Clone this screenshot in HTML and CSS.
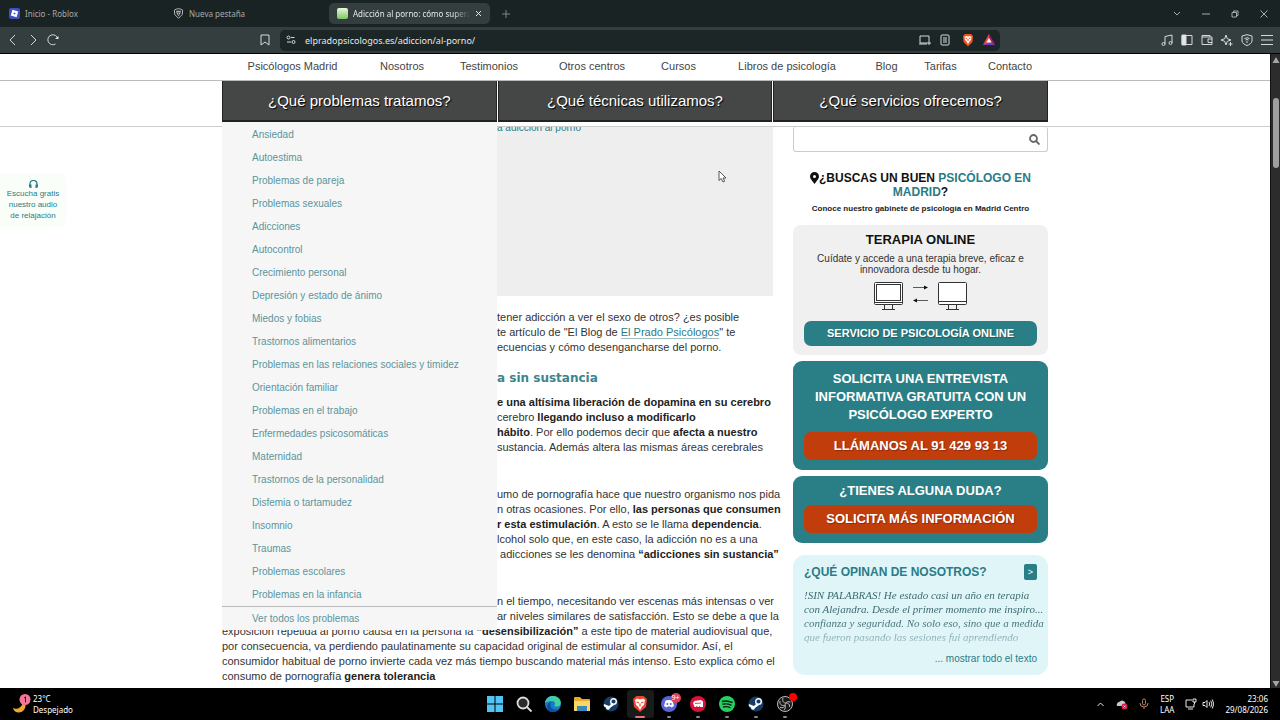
FILE: index.html
```
<!DOCTYPE html>
<html lang="es">
<head>
    <meta charset="UTF-8">
    <meta name="viewport" content="width=device-width, initial-scale=1.0">
    <title>Adicción al porno: cómo superarla</title>
    <link rel="stylesheet" href="styles.css">
</head>
<body>
    <!-- Browser window -->
    <div class="tabbar">
        <button class="tab">
            <svg width="11" height="11" viewBox="0 0 11 11"><rect width="11" height="11" rx="2" fill="#3f4fc4"/><path d="M3.4 1.8 9.2 3.4 7.6 9.2 1.8 7.6Z" fill="#fff"/><path d="M4.9 4.5l1.6.4-.4 1.6-1.6-.4z" fill="#3f4fc4"/></svg>
            <span>Inicio - Roblox</span>
        </button>
        <button class="tab">
            <svg width="11" height="11" viewBox="0 0 16 16"><path d="M8 1l3 .5L14 3l-.5 6.5L8 15 2.500 9.500 2 3l3-1.500z" fill="none" stroke="#b5baba" stroke-width="1.400"/><path d="M4.500 4h7l-1 4L8 12 5.500 8z" fill="#b5baba"/><path d="M6 6l2 1 2-1M8 7v3" stroke="#1a2324" fill="none"/></svg>
            <span>Nueva pestaña</span>
        </button>
        <button class="tab active">
            <svg width="11" height="11" viewBox="0 0 11 11"><defs><linearGradient id="leaf" x2="0" y2="1"><stop stop-color="#e9f9df"/><stop offset="1" stop-color="#7dc663"/></linearGradient></defs><rect width="11" height="11" rx="2" fill="url(#leaf)"/></svg>
            <span class="fade">Adicción al porno: cómo supera</span>
            <svg width="7" height="7" viewBox="0 0 7 7" stroke="#e4e7e7" fill="none"><path d="M1 1l5 5M6 1L1 6"/></svg>
        </button>
        <button class="new-tab" aria-label="Nueva pestaña"><svg width="8" height="8" viewBox="0 0 8 8" stroke="#7d8586"><path d="M4 0v8M0 4h8"/></svg></button>
        <div class="window-controls">
            <button aria-label="Buscar pestañas"><svg width="8" height="8" viewBox="0 0 8 8"><path d="M1 2l3 3 3-3"/></svg></button>
            <button aria-label="Minimizar"><svg width="8" height="8" viewBox="0 0 8 8"><path d="M0 4h8"/></svg></button>
            <button aria-label="Restaurar"><svg width="8" height="8" viewBox="0 0 8 8"><path d="M1 2.500h4.500V7H1zM2.500 2.500V1H7v4.500H5.500"/></svg></button>
            <button aria-label="Cerrar"><svg width="8" height="8" viewBox="0 0 8 8"><path d="M.5.5l7 7M7.500.5l-7 7"/></svg></button>
        </div>
    </div>
    <div class="toolbar">
        <div class="nav-buttons">
            <button aria-label="Atrás"><svg width="12" height="12" viewBox="0 0 12 12"><path d="M8 1L3 6l5 5"/></svg></button>
            <button aria-label="Adelante"><svg width="12" height="12" viewBox="0 0 12 12"><path d="M4 1l5 5-5 5"/></svg></button>
            <button aria-label="Recargar"><svg width="12" height="12" viewBox="0 0 12 12"><path d="M8.500 10A5 5 0 1 1 10.800 5"/><path d="M8 5h3.500V2z" fill="#e4e7e7" stroke="none"/></svg></button>
        </div>
        <div class="address">
            <button aria-label="Marcador"><svg width="10" height="12" viewBox="0 0 10 12"><path d="M1 1h8v10L5 8l-4 3z"/></svg></button>
            <div class="url">
                <svg width="10" height="10" viewBox="0 0 10 10"><circle cx="2.500" cy="2.500" r="1.500"/><path d="M5 2.500h3.500M1 7h4"/><circle cx="7.500" cy="7" r="1.500"/></svg>
                <input type="text" aria-label="Dirección" value="elpradopsicologos.es/adiccion/al-porno/">
                <svg width="12" height="10" viewBox="0 0 12 10"><path d="M8 8H1V1h9v5M0 9h8M10 6v4M8 8h4"/></svg>
                <svg width="10" height="12" viewBox="0 0 10 12"><rect x="1" y="1" width="8" height="10" rx="1"/><path d="M3 4h4M3 6h4M3 8h4"/></svg>
                <svg class="brave" width="12" height="14" viewBox="0 0 12 14"><path d="M3 1h6l2 2-.5 6L6 13.500 1.500 9 1 3z" fill="#f4511e" stroke="none"/><path d="M2.500 4L4 3l2 .5L8 3l1.500 1-.5 3-1.500 1.500L6 11 4.500 8.500 3 7z" fill="#fff" stroke="none"/><path d="M3.500 5l1.500.7M8.500 5L7 5.700M6 6v2" stroke="#f4511e"/></svg>
                <svg width="12" height="12" viewBox="0 0 12 12"><g stroke="none"><path d="M6 0L0 11h12z" fill="#7a3bb8"/><path d="M6 0L0 11l6-3z" fill="#f0452a"/><path d="M6 0l6 11-6-3z" fill="#9e1f63"/><path d="M6 4L3.300 8.500h5.400z" fill="#fff"/></g></svg>
            </div>
        </div>
        <div class="extras">
            <button aria-label="Música"><svg width="12" height="12" viewBox="0 0 12 12"><path d="M4 10V2.500L11 1v8"/><circle cx="2.500" cy="10" r="1.500"/><circle cx="9.500" cy="9" r="1.500"/></svg></button>
            <button aria-label="Barra lateral"><svg width="12" height="12" viewBox="0 0 12 12"><path d="M1 1.500h10v9H1z"/><path d="M1 1h4v10H1z" fill="#e4e7e7"/></svg></button>
            <button aria-label="Cartera"><svg width="12" height="12" viewBox="0 0 12 12"><path d="M9 3V1.500H1v9h10V3H1M11 5H7v3.500h4"/></svg></button>
            <button aria-label="Leo"><svg width="12" height="12" viewBox="0 0 12 12"><path d="M5 1l1.300 3.700L10 6 6.300 7.300 5 11 3.700 7.300 0 6l3.700-1.300zM9.500 8v4M7.500 10h4"/></svg></button>
            <button aria-label="VPN"><svg width="12" height="12" viewBox="0 0 12 12"><path d="M6 .7L11 2v5c0 2-3 4-5 4.500C4 11 1 9 1 7V2z"/><path d="M3.500 4.500Q6 3 8.500 4.500M4.500 6Q6 5 7.500 6M6 7v2"/></svg></button>
            <button aria-label="Menú"><svg width="12" height="12" viewBox="0 0 12 12"><path d="M0 1.500h12M0 6h12M0 10.500h12"/></svg></button>
        </div>
    </div>

    <!-- Web page -->
    <div class="viewport">
        <div class="page">
            <header class="site-header">
                <nav class="top-nav">
                    <div class="wrap top-links">
                        <a href="#">Psicólogos Madrid</a>
                        <a href="#">Nosotros</a>
                        <a href="#">Testimonios</a>
                        <a href="#">Otros centros</a>
                        <a href="#">Cursos</a>
                        <a href="#">Libros de psicología</a>
                        <a href="#">Blog</a>
                        <a href="#">Tarifas</a>
                        <a href="#">Contacto</a>
                    </div>
                </nav>
                <nav class="wrap main-menu">
                    <div class="menu-item">
                        <a class="menu-title" href="#">¿Qué problemas tratamos?</a>
                        <ul class="dropdown">
                            <li><a href="#">Ansiedad</a></li>
                            <li><a href="#">Autoestima</a></li>
                            <li><a href="#">Problemas de pareja</a></li>
                            <li><a href="#">Problemas sexuales</a></li>
                            <li><a href="#">Adicciones</a></li>
                            <li><a href="#">Autocontrol</a></li>
                            <li><a href="#">Crecimiento personal</a></li>
                            <li><a href="#">Depresión y estado de ánimo</a></li>
                            <li><a href="#">Miedos y fobias</a></li>
                            <li><a href="#">Trastornos alimentarios</a></li>
                            <li><a href="#">Problemas en las relaciones sociales y timidez</a></li>
                            <li><a href="#">Orientación familiar</a></li>
                            <li><a href="#">Problemas en el trabajo</a></li>
                            <li><a href="#">Enfermedades psicosomáticas</a></li>
                            <li><a href="#">Maternidad</a></li>
                            <li><a href="#">Trastornos de la personalidad</a></li>
                            <li><a href="#">Disfemia o tartamudez</a></li>
                            <li><a href="#">Insomnio</a></li>
                            <li><a href="#">Traumas</a></li>
                            <li><a href="#">Problemas escolares</a></li>
                            <li><a href="#">Problemas en la infancia</a></li>
                            <li class="all"><a href="#">Ver todos los problemas</a></li>
                        </ul>
                    </div>
                    <div class="menu-item"><a class="menu-title" href="#">¿Qué técnicas utilizamos?</a></div>
                    <div class="menu-item"><a class="menu-title" href="#">¿Qué servicios ofrecemos?</a></div>
                </nav>
            </header>

            <main class="wrap content">
                <article class="post">
                    <div class="toc"><a href="#">a adicción al porno</a></div>
                    <p class="beside-menu">tener adicción a ver el sexo de otros? ¿es posible<br>te artículo de "El Blog de <a href="#">El Prado Psicólogos</a>" te<br>ecuencias y cómo desengancharse del porno.</p>
                    <h2 class="beside-menu">a sin sustancia</h2>
                    <p class="beside-menu"><b>e una altísima liberación de dopamina en su cerebro</b><br>cerebro <b>llegando incluso a modificarlo</b><br><b>hábito</b>. Por ello podemos decir que <b>afecta a nuestro</b><br>sustancia. Además altera las mismas áreas cerebrales</p>
                    <p class="beside-menu spaced">umo de pornografía hace que nuestro organismo nos pida<br>n otras ocasiones. Por ello, <b>las personas que consumen</b><br><b>r esta estimulación</b>. A esto se le llama <b>dependencia</b>.<br>lcohol solo que, en este caso, la adicción no es a una<br>&nbsp;adicciones se les denomina <b>“adicciones sin sustancia”</b></p>
                    <p class="beside-menu spaced">n el tiempo, necesitando ver escenas más intensas o ver<br>ar niveles similares de satisfacción. Esto se debe a que la</p>
                    <p>exposición repetida al porno causa en la persona la <b>“desensibilización”</b> a este tipo de material audiovisual que,<br>por consecuencia, va perdiendo paulatinamente su capacidad original de estimular al consumidor. Así, el<br>consumidor habitual de porno invierte cada vez más tiempo buscando material más intenso. Esto explica cómo el<br>consumo de pornografía <b>genera tolerancia</b></p>
                </article>

                <aside class="sidebar">
                    <form class="search">
                        <input type="search" aria-label="Buscar">
                        <button type="button" aria-label="Buscar"><svg width="11" height="11" viewBox="0 0 11 11" fill="none" stroke="#666" stroke-width="1.800"><circle cx="4.500" cy="4.500" r="3.500"/><path d="M7 7l3.500 3.500"/></svg></button>
                    </form>
                    <h3 class="find"><svg width="9" height="12" viewBox="0 0 9 12"><path fill-rule="evenodd" d="M4.500 0A4.500 4.500 0 0 1 9 4.500C9 7 6 9.500 4.500 12 3 9.500 0 7 0 4.500A4.500 4.500 0 0 1 4.500 0zm0 3a1.500 1.500 0 1 0 0 3 1.500 1.500 0 0 0 0-3z" fill="#111"/></svg>¿BUSCAS UN BUEN <a href="#">PSICÓLOGO EN MADRID</a>?</h3>
                    <p class="find-sub">Conoce nuestro gabinete de psicología en Madrid Centro</p>

                    <section class="online">
                        <h3>TERAPIA ONLINE</h3>
                        <p>Cuídate y accede a una terapia breve, eficaz e innovadora desde tu hogar.</p>
                        <svg width="94" height="29" viewBox="0 0 94 29" fill="none" stroke="#333">
                            <rect x=".5" y=".5" width="28" height="22" rx="1" fill="#fff"/><rect x="2.500" y="2.500" width="24" height="16"/><path d="M.5 20.500h28M10.500 23v4M18.500 23v4M8 27.500h13"/>
                            <rect x="64.500" y=".5" width="28" height="22" rx="1" fill="#fff"/><path d="M64.500 19.500h28M74.500 23v4M82.500 23v4M72 27.500h13"/>
                            <path d="M39 5.500h12M42 18.500h12" stroke-width=".8"/><path d="M50 3.500l4 2-4 2zM43 16.500l-4 2 4 2z" fill="#111" stroke="none"/>
                        </svg>
                        <a class="btn teal" href="#">SERVICIO DE PSICOLOGÍA ONLINE</a>
                    </section>

                    <section class="cta">
                        <h3>SOLICITA UNA ENTREVISTA INFORMATIVA GRATUITA CON UN PSICÓLOGO EXPERTO</h3>
                        <a class="btn orange" href="#">LLÁMANOS AL 91 429 93 13</a>
                    </section>
                    <section class="cta small">
                        <h3>¿TIENES ALGUNA DUDA?</h3>
                        <a class="btn orange" href="#">SOLICITA MÁS INFORMACIÓN</a>
                    </section>

                    <section class="reviews">
                        <div class="reviews-head">
                            <h3>¿QUÉ OPINAN DE NOSOTROS?</h3>
                            <button aria-label="Siguiente">&gt;</button>
                        </div>
                        <blockquote>!SIN PALABRAS! He estado casi un año en terapia<br>con Alejandra. Desde el primer momento me inspiro...<br>confianza y seguridad. No solo eso, sino que a medida<br>que fueron pasando las sesiones fui aprendiendo</blockquote>
                        <a class="more" href="#">... mostrar todo el texto</a>
                    </section>
                </aside>
            </main>

            <a class="audio" href="#">
                <svg width="9" height="8" viewBox="0 0 9 8"><path d="M1 5V4a3.500 3.500 0 0 1 7 0v1" fill="none" stroke="#2a7c86" stroke-width="1.200"/><path d="M0 4.500h2.500V8H1.500L0 7zM9 4.500H6.500V8h1L9 7z" fill="#2a7c86"/></svg>
                <span>Escucha gratis<br>nuestro audio<br>de relajación</span>
            </a>
            <svg class="cursor" width="9" height="13" viewBox="0 0 9 13"><path d="M1 1v9.500l2.200-2L5 12l1.700-.8L5 8h3z" fill="#fff" stroke="#444" stroke-width=".9"/></svg>
        </div>
        <div class="scrollbar">
            <svg width="8" height="6" viewBox="0 0 8 6"><path d="M4 0l3.500 6h-7z" fill="#a5a5a5"/></svg>
            <div class="track"><div class="thumb"></div></div>
            <svg width="8" height="6" viewBox="0 0 8 6"><path d="M4 6L.5 0h7z" fill="#a5a5a5"/></svg>
        </div>
    </div>

    <!-- Windows taskbar -->
    <footer class="taskbar">
        <button class="weather">
            <svg width="20" height="20" viewBox="0 0 20 20"><path d="M13 9c2 5-2 10-7 9.500Q2 18 1 14c4 2 8 0 10-5z" fill="#f0a732"/><circle cx="13" cy="5.500" r="5.500" fill="#f2789a"/><path d="M12 4l1.500-1.200v5.500" fill="none" stroke="#511"/></svg>
            <span>23°C<br>Despejado</span>
        </button>
        <div class="apps">
            <button aria-label="Inicio"><svg viewBox="0 0 18 18"><path d="M1 1h7.500v7.500H1zM9.500 1H17v7.500H9.500zM1 9.500h7.500V17H1zM9.500 9.500H17V17H9.500z" fill="#53c5f5"/></svg></button>
            <button aria-label="Buscar"><svg viewBox="0 0 18 18" fill="none"><circle cx="8" cy="8" r="5.500" stroke="#ddd" stroke-width="1.800" fill="#2b2b2b"/><path d="M12 12l4.500 4.500" stroke="#ddd" stroke-width="1.800"/></svg></button>
            <button aria-label="Edge"><svg viewBox="0 0 18 18"><circle cx="9" cy="9" r="8" fill="#167bc8"/><path d="M1 8C2 2 7 .5 11 1.300c5 1 7 6 5 9-1 1.500-4 1.500-6 .7 2-2 1-5-2-5S3 6.500 1 8z" fill="#42d09c"/><path d="M6.500 9c-1 4 3 7 8 5-3 4-9 4-11 0-1-3 0-6 3-7z" fill="#0c4f9c"/><path d="M1 8c1-4 5-6 9-4-4 0-6 1-9 4z" fill="#33bde8"/></svg></button>
            <button aria-label="Archivos"><svg viewBox="0 0 18 18"><path d="M1 3q0-1 1-1h5l2 2h7q1 0 1 1v11H1z" fill="#e8a92e"/><path d="M1 6h16v10H1z" fill="#fbd665"/><path d="M4 11h10v5H4z" fill="#3888bd"/></svg></button>
            <button aria-label="Steam"><svg viewBox="0 0 18 18"><circle cx="9" cy="9" r="7.500" fill="#183c68"/><circle cx="11.500" cy="6.500" r="2.800" fill="#183c68" stroke="#fff" stroke-width="1.400"/><path d="M2 9l5 2 3-3 2 2-4 3a2 2 0 0 1-4-.5L1.700 11z" fill="#fff"/></svg></button>
            <button class="current" aria-label="Brave"><svg viewBox="0 0 18 18"><path d="M5.500 1h7L16 4l-1 8-6 5-6-5L2 4z" fill="#e8442e"/><path d="M4 5l2-1.500 3 .7 3-.7L14 5l-1 5-2 1.500L9 15l-2-3.500L5 10z" fill="#fff"/><path d="M5.500 7l2.500 1M12.500 7L10 8M9 8.500v3" stroke="#e8442e" stroke-width="1.200"/></svg></button>
            <button class="open" aria-label="Discord"><svg viewBox="0 0 18 18"><circle cx="9" cy="9" r="8" fill="#5865d8"/><path d="M5.500 5.500Q9 4.500 12.500 5.500L14 11l-2.500 1.500-1-1h-3l-1 1L4 11z" fill="#fff"/><circle cx="7.300" cy="9" r="1" fill="#5865d8"/><circle cx="10.700" cy="9" r="1" fill="#5865d8"/></svg><span class="badge">9+</span></button>
            <button class="open" aria-label="Riot"><svg viewBox="0 0 18 18"><circle cx="9" cy="9" r="8" fill="#d9123c"/><path d="M4 8l1.500-2L12 5l2 1.500V12h-3v-1.500L10 12H8.500L8 10.500 7 12H5.500z" fill="#fff"/><path d="M6 8.500l6-.5" stroke="#d9123c" stroke-width=".8"/></svg></button>
            <button class="open" aria-label="Spotify"><svg viewBox="0 0 18 18"><circle cx="9" cy="9" r="8" fill="#25d162"/><path d="M4 6.500q5-1.500 10.500 1M4.500 9.300q4.500-1.200 9 1M5 12q4-1 7.500.8" fill="none" stroke="#0b1e11" stroke-width="1.400"/></svg></button>
            <button class="open" aria-label="Steam"><svg viewBox="0 0 18 18"><circle cx="9" cy="9" r="7.500" fill="#183c68"/><circle cx="11.500" cy="6.500" r="2.800" fill="#183c68" stroke="#fff" stroke-width="1.400"/><path d="M2 9l5 2 3-3 2 2-4 3a2 2 0 0 1-4-.5L1.700 11z" fill="#fff"/></svg></button>
            <button class="open" aria-label="OBS"><svg viewBox="0 0 18 18" fill="none" stroke="#bbb"><circle cx="9" cy="9" r="7.500" fill="#181818"/><path d="M7 3c-1 4 1 5 3 5s4 1 3.500 4M14.500 7c-4-1-5 1-5.500 3s-2 3.500-5 2.500M4 6c-1 3 2 5 4 4.500M9 10c1 2 0 4-1 5"/></svg><span class="badge rec"></span></button>
        </div>
        <div class="tray">
            <svg width="9" height="9" viewBox="0 0 9 9"><path d="M1.500 6l3-3 3 3"/></svg>
            <svg width="12" height="12" viewBox="0 0 12 12"><path d="M1 8a3 3 0 0 1 2-4q3-3 6 0l1 4z" fill="#c9c9c9" stroke="none"/><circle cx="8.500" cy="8.500" r="3" fill="#d81b50" stroke="none"/><path d="M7.500 7.500l2 2M9.500 7.500l-2 2" stroke-width=".8"/></svg>
            <svg class="mic" width="10" height="12" viewBox="0 0 10 12"><rect x="3.500" y="1" width="3" height="6" rx="1.500"/><path d="M1 5q0 4 4 4t4-4M5 9v2"/></svg>
            <span class="lang">ESP<br>LAA</span>
            <svg class="net" width="12" height="12" viewBox="0 0 12 12"><path d="M7 2H1v7h8V6M3 11h5M8 1h3v3H8zM9.500 4v2"/></svg>
            <svg width="12" height="12" viewBox="0 0 12 12"><path d="M1 4.500h2l2-2v7l-2-2H1zM7 4q1.500 2 0 4M8.700 2.700q2.500 3.300 0 6.600M10.300 1.500q3 4.500 0 9"/></svg>
            <span class="clock">23:06<br>29/08/2026</span>
        </div>
    </footer>
</body>
</html>
```

FILE: styles.css
```
* {
    box-sizing: border-box;
}

body {
    display: flex;
    flex-direction: column;
    height: 100vh;
    margin: 0;
    overflow: hidden;
    font-family: "Liberation Sans", Arial, sans-serif;
    font-size: 11px;
    color: #333;
    background-color: #fff;
}

h2, h3, p, ul, blockquote {
    margin: 0;
    padding: 0;
}

a {
    color: #2a7c86;
    text-decoration: none;
}

button {
    display: flex;
    align-items: center;
    justify-content: center;
    padding: 0;
    border: none;
    background: none;
    color: inherit;
    font: inherit;
}

svg {
    flex: none;
}

/* Browser window */
.tabbar {
    display: flex;
    align-items: center;
    height: 27px;
    padding-left: 1px;
    background-color: #1a2324;
    color: #a4abab;
    font-family: "Noto Sans", sans-serif;
    font-size: 8px;
}

.tab {
    justify-content: flex-start;
    gap: 5px;
    width: 161px;
    height: 21px;
    margin-right: 3px;
    padding: 0 8px;
    border-radius: 5px;
}

.tab.active {
    background-color: #353e3f;
    color: #e4e7e7;
}

.fade {
    flex: 1;
    overflow: hidden;
    white-space: nowrap;
    text-align: left;
    mask-image: linear-gradient(to right, #000 85%, transparent);
}

.new-tab {
    width: 25px;
}

.window-controls {
    display: flex;
    gap: 4px;
    margin-left: auto;
    padding-right: 4px;
}

.window-controls button {
    width: 25px;
}

.window-controls svg {
    fill: none;
    stroke: #a4abab;
}

.toolbar {
    display: grid;
    grid-template-columns: 257fr 743fr 280fr;
    align-items: center;
    height: 27px;
    border-bottom: 1px solid #000;
    background-color: #353e3f;
}

.toolbar svg {
    fill: none;
    stroke: #d5d9d9;
}

.nav-buttons,
.extras,
.address {
    display: flex;
    align-items: center;
}

.nav-buttons {
    gap: 8px;
    padding-left: 7px;
}

.address {
    gap: 10px;
    padding-left: 3px;
}

.url {
    display: flex;
    flex: 1;
    align-items: center;
    gap: 9px;
    height: 21px;
    padding: 0 5px 0 6px;
    border-radius: 5px;
    background-color: #1c2627;
}

.url input {
    flex: 1;
    min-width: 0;
    padding: 0;
    border: none;
    background: none;
    color: #e4e7e7;
    font: 9px "Noto Sans", sans-serif;
}

.url .brave {
    margin-left: 3px;
}

.extras {
    justify-content: flex-end;
    gap: 8px;
    padding-right: 7px;
}

/* Page */
.viewport {
    display: flex;
    flex: 1;
    min-height: 0;
}

.page {
    position: relative;
    flex: 1;
    overflow: hidden;
}

.wrap {
    width: 100%;
    max-width: 826px;
    margin: 0 auto;
}

.site-header {
    position: relative;
    z-index: 2;
    padding-bottom: 4px;
    border-bottom: 1px solid #ccc;
    background-color: #fff;
}

.top-nav {
    border-bottom: 1px solid #bbb;
}

.top-links {
    display: grid;
    grid-template-columns: 141fr 78fr 96fr 110fr 63fr 154fr 45fr 63fr 76fr;
    height: 26px;
    line-height: 25px;
    text-align: center;
}

.top-links a {
    color: #444;
    white-space: nowrap;
}

.main-menu {
    display: grid;
    grid-template-columns: repeat(3, 1fr);
    gap: 1px;
}

.menu-item {
    position: relative;
}

.menu-title {
    display: block;
    height: 41px;
    border: 1px solid #222;
    border-width: 0 1px 2px;
    background-color: #444746;
    color: #fff;
    font-size: 15px;
    line-height: 40px;
    text-align: center;
    text-shadow: 1px 1px 1px #000;
}

.dropdown {
    position: absolute;
    top: 41px;
    left: 0;
    width: 100%;
    padding-top: 1px;
    list-style: none;
    background-color: #f6f6f6;
    font-size: 10px;
    line-height: 23px;
}

.dropdown a {
    padding-left: 30px;
    color: #5a959c;
}

.dropdown .all {
    border-top: 1px solid #bbb;
}

.content {
    display: grid;
    grid-template-columns: minmax(0, 551fr) minmax(0, 255fr);
    gap: 20px;
}

.post {
    line-height: 15px;
    white-space: nowrap;
}

.post b {
    color: #222;
}

.post p a {
    border-bottom: 1px solid #9dbfc3;
}

.beside-menu {
    padding-left: 275px;
}

.toc {
    display: flow-root;
    height: 169px;
    margin-bottom: 14px;
    padding-left: 275px;
    background-color: #efeeee;
    font-size: 10px;
}

.toc a {
    display: block;
    margin-top: -7px;
}

.post h2 {
    margin: 15px 0 9px;
    color: #3c858d;
    font: bold 12px/16px "DejaVu Sans", sans-serif;
}

.post .spaced {
    margin-top: 32px;
}

/* Sidebar */
.sidebar {
    text-align: center;
}

.sidebar h3 {
    font-size: 12px;
}

.search {
    display: flex;
    height: 25px;
    border: 1px solid #ccc;
    border-top: none;
    border-radius: 3px;
}

.search input {
    flex: 1;
    min-width: 0;
    border: none;
    background: none;
}

.search button {
    width: 26px;
}

.sidebar .find {
    padding: 19px 10px 0;
    color: #111;
    line-height: 14px;
}

.find svg {
    vertical-align: -2px;
}

.find-sub {
    margin: 4px 0 10px;
    color: #222;
    font-size: 8px;
    font-weight: bold;
    line-height: 12px;
}

.online {
    padding: 7px 11px 9px;
    border-radius: 8px;
    background-color: #f0f0f0;
}

.sidebar .online h3 {
    color: #111;
    font-size: 13px;
    line-height: 16px;
}

.online p {
    margin: 5px 0 7px;
    font-size: 10px;
    line-height: 11px;
}

.online svg {
    display: block;
    margin: 0 auto 10px;
}

.btn {
    display: block;
    border-radius: 7px;
    color: #fff;
    font-weight: bold;
    text-shadow: 1px 1px 1px rgba(0, 0, 0, 0.3);
}

.btn.teal {
    background-color: #2a7f87;
    font-size: 11px;
    line-height: 25px;
}

.btn.orange {
    background-color: #c23d0c;
    font-size: 13px;
    line-height: 28px;
}

.cta {
    margin-top: 6px;
    padding: 9px 11px 10px;
    border-radius: 9px;
    background-color: #2a7f87;
    color: #fff;
}

.sidebar .cta h3 {
    margin-bottom: 8px;
    font-size: 13px;
    line-height: 18px;
}

.cta.small {
    padding-top: 6px;
}

.sidebar .cta.small h3 {
    margin-bottom: 5px;
}

.reviews {
    margin-top: 12px;
    padding: 9px 11px;
    border-radius: 12px;
    background-color: #e0f5f8;
}

.reviews-head {
    display: flex;
    align-items: center;
    justify-content: space-between;
}

.reviews-head h3 {
    color: #2a7c86;
}

.reviews-head button {
    width: 13px;
    height: 16px;
    border-radius: 2px;
    background-color: #2a7f87;
    color: #fff;
    font-size: 9px;
}

.reviews blockquote {
    margin: 8px -10px 8px 0;
    color: #3c6c72;
    font: italic 11px/14px "Liberation Serif", serif;
    text-align: left;
    white-space: nowrap;
    mask-image: linear-gradient(#000 60%, rgba(0, 0, 0, 0.3));
}

.more {
    display: block;
    font-size: 10px;
    line-height: 14px;
    text-align: right;
}

.audio {
    position: absolute;
    top: 119px;
    left: 0;
    display: flex;
    flex-direction: column;
    align-items: center;
    width: 66px;
    padding: 7px 0 6px;
    border-radius: 0 6px 6px 0;
    background-color: #f9fef8;
    font-size: 8px;
    line-height: 11px;
    text-align: center;
}

.cursor {
    position: absolute;
    top: 116px;
    left: 718px;
}

.scrollbar {
    display: flex;
    flex-direction: column;
    align-items: center;
    width: 10px;
    padding: 3px 0 1px;
    border-left: 1px solid #111;
    background-color: #2c2c2c;
}

.track {
    flex: 1;
    width: 6px;
    padding-top: 35px;
}

.thumb {
    height: 12%;
    border-radius: 3px;
    background-color: #9f9f9f;
}

/* Taskbar */
.taskbar {
    display: grid;
    grid-template-columns: 1fr auto 1fr;
    align-items: center;
    height: 32px;
    background-color: #000;
    color: #fff;
    font: 8px/11px "Noto Sans", sans-serif;
}

.weather {
    justify-self: start;
    gap: 1px;
    padding-left: 12px;
    text-align: left;
}

.apps {
    display: flex;
    gap: 2px;
}

.apps button {
    position: relative;
    width: 27px;
    height: 28px;
    border-radius: 3px;
}

.apps svg {
    width: 18px;
    height: 18px;
}

.apps .current {
    background-color: #171b19;
}

.apps .open::after,
.apps .current::after {
    content: "";
    position: absolute;
    bottom: 0;
    width: 4px;
    height: 2px;
    border-radius: 1px;
    background-color: #888;
}

.apps .current::after {
    width: 10px;
    background-color: #e07a6c;
}

.badge {
    position: absolute;
    top: 3px;
    right: 2px;
    width: 10px;
    height: 10px;
    border-radius: 5px;
    background-color: #d8455a;
    font-size: 7px;
    line-height: 10px;
}

.badge.rec {
    width: 8px;
    height: 8px;
    background-color: #f00;
}

.tray {
    display: flex;
    align-items: center;
    justify-content: flex-end;
    gap: 11px;
    padding-right: 12px;
    text-align: center;
}

.tray svg {
    fill: none;
    stroke: #e8e8e8;
}

.tray .mic {
    stroke: #b08068;
}

.tray .net {
    margin-right: -6px;
}

.tray .clock {
    text-align: right;
}
```
